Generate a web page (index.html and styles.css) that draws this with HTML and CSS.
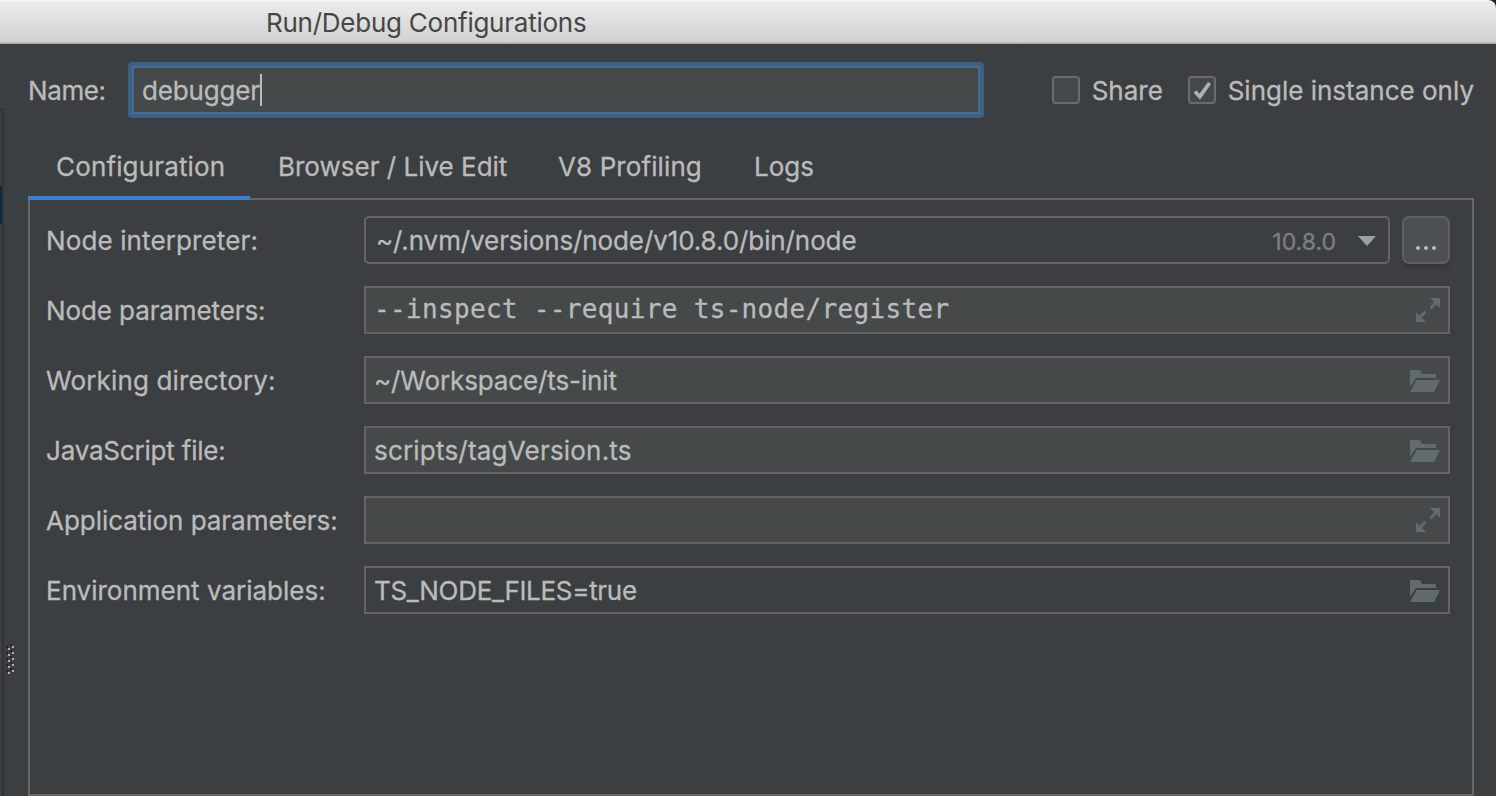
FILE: index.html
```
<!DOCTYPE html>
<html lang="en">
<head>
<meta charset="utf-8">
<title>Run/Debug Configurations</title>
<link rel="stylesheet" href="styles.css">
</head>
<body>
<svg width="0" height="0" class="defs">
  <symbol id="folder" viewBox="0 0 30 22"><path d="M0 0h10l2 4h14v4H6L0 17z"/><path d="M6.500 10H30l-6 12H0z"/></symbol>
  <symbol id="expand" viewBox="0 0 24 24"><path d="M14 0h10v10l-3.600-3.600-5 5-1.800-1.800 4.500-5.500z"/><path d="M10 24H0V14l3.600 3.600 5-5 1.800 1.800-4.500 5.500z"/></symbol>
</svg>
<div class="window">
  <header class="titlebar"><span class="t-title">Run/Debug Configurations</span></header>
  <div class="body">
    <aside class="splitter"><div class="tree-selection"></div>
      <svg class="grip" width="8" height="30"><g fill="#222426"><path d="M4 0h2v2H4zM0 2h2v2H0zM4 6h2v2H4zM0 8h2v2H0zM4 12h2v2H4zM0 14h2v2H0zM4 18h2v2H4zM0 20h2v2H0zM4 24h2v2H4zM0 26h2v2H0z"/></g><g fill="#b0b0b0"><path d="M6 2h2v2H6zM2 4h2v2H2zM6 8h2v2H6zM2 10h2v2H2zM6 14h2v2H6zM2 16h2v2H2zM6 20h2v2H6zM2 22h2v2H2zM6 26h2v2H6zM2 28h2v2H2z"/></g></svg>
    </aside>
    <main class="content">
      <div class="name-row">
        <label class="name-label"><span class="t-name">Name:</span></label>
        <div class="name-input"><span class="t-debugger">debugger</span><i class="caret"></i></div>
        <div class="check share"><span class="box"></span><span>Share</span></div>
        <div class="check"><span class="box"><svg width="24" height="24"><path d="M5 13.500l4.800 5.200L19.500 5" fill="none" stroke="#b0b0b0" stroke-width="3.800"/></svg></span><span>Single instance only</span></div>
      </div>
      <nav class="tabs">
        <div class="tab active"><span class="t-conf">Configuration</span></div>
        <div class="tab tab-browser"><span>Browser / Live Edit</span></div>
        <div class="tab tab-v8"><span class="t-v8">V8 Profiling</span></div>
        <div class="tab"><span>Logs</span></div>
      </nav>
      <section class="panel">
        <div class="row"><label><span class="t-interp">Node interpreter:</span></label>
          <div class="combo"><span class="t-path">~/.nvm/versions/node/v10.8.0/bin/node</span><span class="version">10.8.0</span><svg class="arrow" width="18" height="10"><path d="M0 0h18L9 10z"/></svg></div>
          <button class="more" aria-label="Browse"><i></i><i></i><i></i></button></div>
        <div class="row"><label><span class="t-params">Node parameters:</span></label>
          <div class="field mono"><span class="t-mono">--inspect --require ts-node/register</span><svg class="expand"><use href="#expand"/></svg></div></div>
        <div class="row"><label><span class="t-work">Working directory:</span></label>
          <div class="field"><span class="t-workspace">~/Workspace/ts-init</span><svg class="folder"><use href="#folder"/></svg></div></div>
        <div class="row"><label><span class="t-js">JavaScript file:</span></label>
          <div class="field"><span class="t-script">scripts/tagVersion.ts</span><svg class="folder"><use href="#folder"/></svg></div></div>
        <div class="row"><label><span class="t-app">Application parameters:</span></label>
          <div class="field"><svg class="expand"><use href="#expand"/></svg></div></div>
        <div class="row"><label><span>Environment variables:</span></label>
          <div class="field env"><span class="t-files">TS_NODE_FILES=true</span><svg class="folder"><use href="#folder"/></svg></div></div>
      </section>
    </main>
  </div>
</div>
</body>
</html>
```
FILE: styles.css
```
*, *::before { box-sizing: border-box; }
body { margin: 0; background: #1d1e20; color: #bbbbbb; font: 26px/32px Inter, "Liberation Sans", sans-serif; -webkit-text-stroke: 0.3px; }
span { white-space: nowrap; }
.defs { position: absolute; }
.window { width: 1496px; height: 796px; display: flex; flex-direction: column; overflow: hidden; border-top-right-radius: 8px; background: #3c3f41; }
.titlebar { height: 44px; flex: none; padding: 7px 0 0 266px; color: #464646; background: linear-gradient(#f8f8f8 0, #ebebeb 2px, #d2d2d2 42px, #acacac 43px, #acacac); -webkit-text-stroke: 0; }
.body { flex: 1; min-height: 0; display: flex; }
.splitter { width: 28px; flex: none; padding-top: 64px; position: relative; }
.splitter::before { content: ""; display: block; width: 4px; height: 100%; border: 2px solid #333435; border-left: 0; border-bottom: 0; }
.tree-selection { position: absolute; left: 0; top: 142px; width: 2px; height: 38px; background: #0d293e; }
.grip { position: absolute; left: 6px; top: 600px; }
.content { width: 1446px; display: flex; flex-direction: column; }
.name-row { height: 92px; padding-top: 18px; display: flex; align-items: flex-start; }
.name-label { width: 100px; padding-top: 13px; }
.name-input { width: 856px; height: 56px; border: 4px solid #3d6185; border-radius: 4px; background: #45494a; box-shadow: inset 0 0 0 2px #466d94; display: flex; align-items: flex-start; padding: 9px 0 0 10px; }
.caret { width: 2px; height: 32px; background: #bbb; margin-top: -1px; }
.check { display: flex; gap: 12px; padding-top: 13px; align-items: flex-start; }
.share { margin-left: 68px; width: 136px; flex: none; }
.box { width: 28px; height: 28px; margin-top: 1px; border: 2px solid #6b6b6b; border-radius: 4px; background: #43494a; flex: none; }
.box svg { display: block; }
.tabs { height: 62px; display: flex; }
.tab { height: 64px; padding-top: 15px; padding-left: 28px; }
.tab.active { width: 222px; border-bottom: 4px solid #3880d1; z-index: 1; }
.tab-browser { width: 280px; }
.tab-v8 { width: 196px; }
.panel { flex: 1; border: 2px solid #686766; padding: 16px 22px 0 16px; display: flex; flex-direction: column; gap: 22px; }
.row { display: flex; height: 48px; flex: none; }
.row label { width: 318px; padding-top: 9px; }
.field, .combo { flex: 1; border: 2px solid #646464; background: #45494a; display: flex; padding: 7px 8px 0; }
.combo { border-radius: 5px; background: #3c3f41; padding-left: 10px; }
.field.env { background: #3c3f41; }
.mono { font-family: "DejaVu Sans Mono", monospace; padding-top: 5px; }
.version { color: #7f7f7f; margin-left: auto; font-size: 23px; padding-top: 1px; }
.arrow { fill: #9da0a3; margin: 11px 4px 0 22px; }
.more { width: 48px; height: 48px; margin: 0 0 0 12px; border: 2px solid #5e6060; border-radius: 7px; background: #4c5052; box-shadow: 0 3px 2px #353739; display: flex; gap: 4px; justify-content: center; padding: 28px 0 0; }
.more i { width: 4px; height: 4px; border-radius: 2px; background: #bbb; }
.folder, .expand { fill: #616a6e; margin-left: auto; }
.folder { width: 30px; height: 22px; margin-top: 5px; }
.expand { width: 24px; height: 24px; margin-top: 3px; }
.mono .expand { margin-top: 5px; }

/* Tracking per text */
.t-title { letter-spacing: -0.25px; }
.t-name { letter-spacing: -0.4px; }
.t-debugger { letter-spacing: -0.15px; }
.t-conf { letter-spacing: 0.15px; }
.t-v8 { letter-spacing: 0.1px; }
.t-interp { letter-spacing: 0.12px; }
.t-params { letter-spacing: -0.1px; }
.t-path { letter-spacing: -0.1px; }
.t-mono { letter-spacing: 0.33px; }
.t-work { letter-spacing: 0.15px; }
.t-workspace { letter-spacing: -0.12px; }
.t-js { letter-spacing: -0.2px; }
.t-script { letter-spacing: 0.2px; }
.t-app { letter-spacing: -0.04px; }
.t-files { letter-spacing: -0.3px; }
```
